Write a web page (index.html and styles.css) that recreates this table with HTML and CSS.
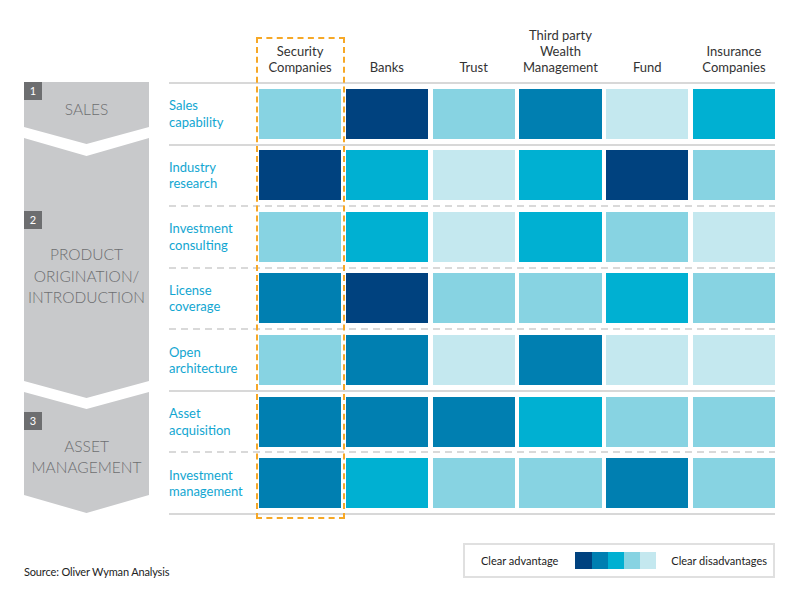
FILE: index.html
```html
<!DOCTYPE html>
<html lang="en">
<head>
<meta charset="utf-8">
<title>Competitive landscape</title>
<link rel="stylesheet" href="styles.css">
</head>
<body>
<div class="page">
  <div class="chart">
    <div class="stages">
      <div class="stage stage-1">
        <span class="badge">1</span>
        <div class="stage-name">SALES</div>
      </div>
      <div class="stage stage-2">
        <span class="badge">2</span>
        <div class="stage-name">PRODUCT<br>ORIGINATION/<br>INTRODUCTION</div>
      </div>
      <div class="stage stage-3">
        <span class="badge">3</span>
        <div class="stage-name">ASSET<br>MANAGEMENT</div>
      </div>
    </div>

    <div class="table">
      <div class="highlight"></div>
      <div class="row head">
        <div></div>
        <div class="col-h">Security<br>Companies</div>
        <div class="col-h">Banks</div>
        <div class="col-h">Trust</div>
        <div class="col-h">Third party<br>Wealth<br>Management</div>
        <div class="col-h">Fund</div>
        <div class="col-h">Insurance<br>Companies</div>
      </div>

      <div class="row solid">
        <div class="label">Sales<br>capability</div>
        <div class="cell l4"></div><div class="cell l1"></div><div class="cell l4"></div><div class="cell l2"></div><div class="cell l5"></div><div class="cell l3"></div>
      </div>
      <div class="row solid">
        <div class="label">Industry<br>research</div>
        <div class="cell l1"></div><div class="cell l3"></div><div class="cell l5"></div><div class="cell l3"></div><div class="cell l1"></div><div class="cell l4"></div>
      </div>
      <div class="row dash">
        <div class="label">Investment<br>consulting</div>
        <div class="cell l4"></div><div class="cell l3"></div><div class="cell l5"></div><div class="cell l3"></div><div class="cell l4"></div><div class="cell l5"></div>
      </div>
      <div class="row dash">
        <div class="label">License<br>coverage</div>
        <div class="cell l2"></div><div class="cell l1"></div><div class="cell l4"></div><div class="cell l4"></div><div class="cell l3"></div><div class="cell l4"></div>
      </div>
      <div class="row dash">
        <div class="label">Open<br>architecture</div>
        <div class="cell l4"></div><div class="cell l2"></div><div class="cell l5"></div><div class="cell l2"></div><div class="cell l5"></div><div class="cell l5"></div>
      </div>
      <div class="row solid">
        <div class="label">Asset<br>acquisition</div>
        <div class="cell l2"></div><div class="cell l2"></div><div class="cell l2"></div><div class="cell l3"></div><div class="cell l4"></div><div class="cell l4"></div>
      </div>
      <div class="row dash">
        <div class="label">Investment<br>management</div>
        <div class="cell l2"></div><div class="cell l3"></div><div class="cell l4"></div><div class="cell l4"></div><div class="cell l2"></div><div class="cell l4"></div>
      </div>
    </div>
  </div>

  <div class="footer">
    <div class="source">Source: Oliver Wyman Analysis</div>
    <div class="legend">
      <span class="legend-text">Clear advantage</span>
      <span class="scale">
        <span class="sw l1"></span><span class="sw l2"></span><span class="sw l3"></span><span class="sw l4"></span><span class="sw l5"></span>
      </span>
      <span class="legend-text">Clear disadvantages</span>
    </div>
  </div>
</div>
</body>
</html>
```

FILE: styles.css
```css
* { box-sizing: border-box; }

html, body {
  margin: 0;
  padding: 0;
  background: #ffffff;
}

body {
  font-family: Lato, "Open Sans", sans-serif;
  color: #333333;
  width: 801px;
  height: 601px;
  overflow: hidden;
}

.page {
  padding-left: 24px;
}

.chart {
  display: flex;
  align-items: flex-start;
}

/* ---------- stages (chevrons) ---------- */
.stages {
  width: 125px;
  margin-top: 82px;
  display: flex;
  flex-direction: column;
}

.stage {
  background: #c8c9cb;
  display: flex;
  flex-direction: column;
  align-items: stretch;
}

.stage-1 {
  height: 62px;
  clip-path: polygon(0 0, 100% 0, 100% 45px, 50% 62px, 0 45px);
}

.stage-2 {
  height: 260px;
  margin-top: -6px;
  padding-top: 73px;
  clip-path: polygon(0 0, 50% 18px, 100% 0, 100% 243px, 50% 260px, 0 243px);
}

.stage-3 {
  height: 121px;
  margin-top: -6px;
  padding-top: 20px;
  clip-path: polygon(0 0, 50% 17px, 100% 0, 100% 103px, 50% 121px, 0 103px);
}

.badge {
  width: 18px;
  height: 18px;
  background: #6d6e70;
  color: #ffffff;
  font-size: 11px;
  line-height: 18px;
  text-align: center;
}

.stage-name {
  text-align: center;
  color: #6d6e70;
  font-size: 15.5px;
  font-weight: 300;
  line-height: 18px;
}

.stage-2 .stage-name {
  margin-top: 15px;
  line-height: 21.5px;
}

.stage-3 .stage-name {
  margin-top: 6px;
  line-height: 21px;
}

/* ---------- table ---------- */
.table {
  position: relative;
  margin-left: 20px;
  width: 606.2px;
  border-bottom: 2px solid #d8d8d8;
}

.row {
  display: grid;
  grid-template-columns: 85.4px repeat(6, 82.2px);
  column-gap: 4.6px;
  align-items: center;
  height: 61.57px;
  padding-top: 2px;
  background-repeat: no-repeat;
  background-position: 0 0;
  background-size: 100% 2px;
}

.row.head {
  height: 82px;
  padding: 0 0 7px 0;
  align-items: end;
  background: none;
}

.row.solid {
  background-image: linear-gradient(#d8d8d8, #d8d8d8);
}

.row.dash {
  background-image: repeating-linear-gradient(to right, #d9d9d9 0 7px, transparent 7px 12px);
}

.col-h {
  text-align: center;
  font-size: 13px;
  line-height: 16px;
  color: #333333;
}

.label {
  color: #12a6d1;
  font-size: 13px;
  line-height: 16.5px;
}

.cell {
  height: 50px;
}

.l1 { background: #00427f; }
.l2 { background: #007fb1; }
.l3 { background: #00b0d2; }
.l4 { background: #87d3e2; }
.l5 { background: #c4e8ef; }

.highlight {
  position: absolute;
  left: 87px;
  top: 37px;
  width: 89px;
  height: 482px;
  border: 2px dashed #f6a827;
  pointer-events: none;
}

/* ---------- footer ---------- */
.footer {
  display: flex;
  justify-content: space-between;
  align-items: flex-end;
  width: 751px;
  margin-top: 28px;
}

.source {
  font-size: 11px;
  line-height: 12px;
  color: #222222;
  letter-spacing: -0.15px;
}

.legend {
  display: flex;
  align-items: center;
  width: 312px;
  height: 35px;
  border: 2px solid #e0e0e0;
  padding-left: 16px;
  font-size: 11px;
  color: #222222;
}

.scale {
  display: flex;
  margin-left: 17px;
  margin-right: 15px;
}

.sw {
  width: 16.2px;
  height: 17px;
}
```
